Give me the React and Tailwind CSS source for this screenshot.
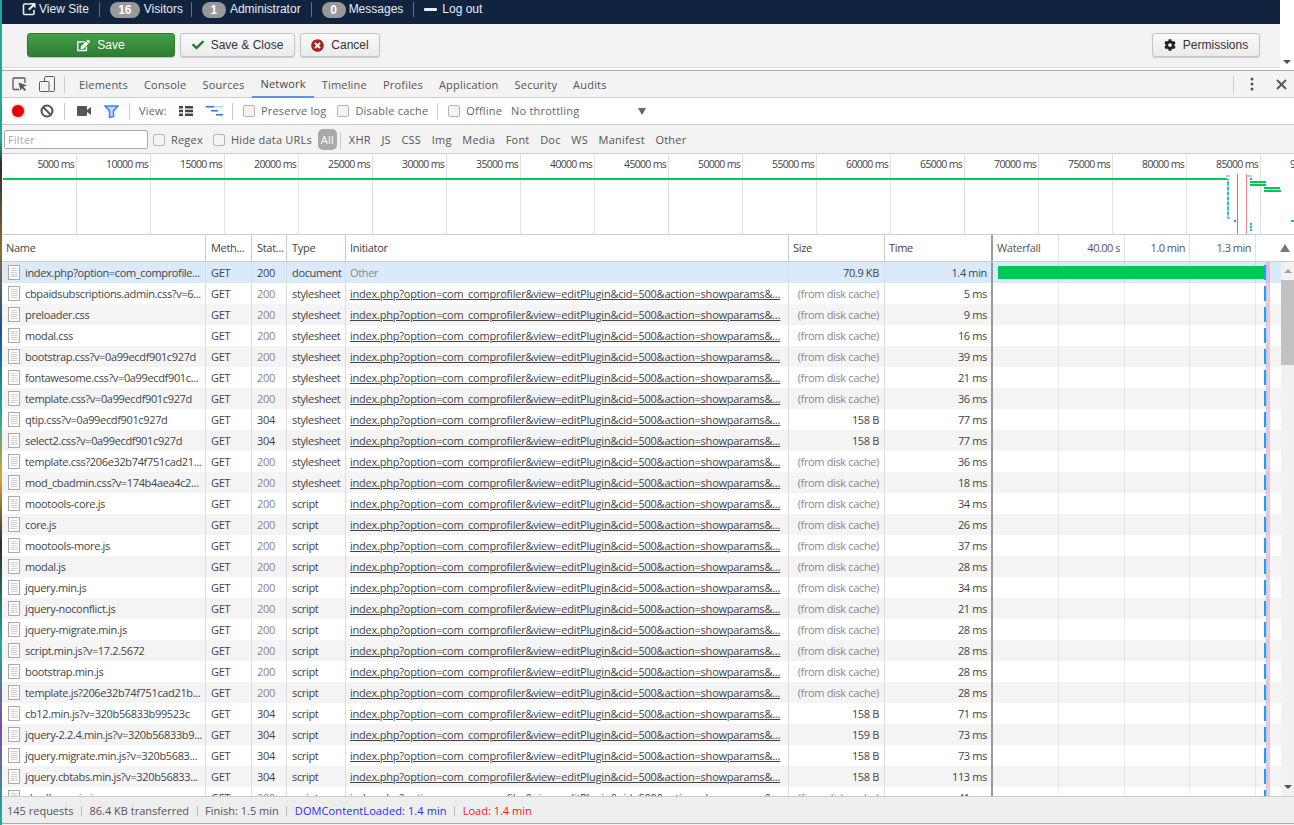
import React from "react";
import { FaCheck, FaTimesCircle, FaCog, FaEdit } from "react-icons/fa";

const INIT = "index.php?option=com_comprofiler&view=editPlugin&cid=500&action=showparams&...";
const rows = [
  ["index.php?option=com_comprofile...", "200", "document", "70.9 KB", "1.4 min"],
  ["cbpaidsubscriptions.admin.css?v=6...", "200", "stylesheet", "", "5 ms"],
  ["preloader.css", "200", "stylesheet", "", "9 ms"],
  ["modal.css", "200", "stylesheet", "", "16 ms"],
  ["bootstrap.css?v=0a99ecdf901c927d", "200", "stylesheet", "", "39 ms"],
  ["fontawesome.css?v=0a99ecdf901c...", "200", "stylesheet", "", "21 ms"],
  ["template.css?v=0a99ecdf901c927d", "200", "stylesheet", "", "36 ms"],
  ["qtip.css?v=0a99ecdf901c927d", "304", "stylesheet", "158 B", "77 ms"],
  ["select2.css?v=0a99ecdf901c927d", "304", "stylesheet", "158 B", "77 ms"],
  ["template.css?206e32b74f751cad21...", "200", "stylesheet", "", "36 ms"],
  ["mod_cbadmin.css?v=174b4aea4c2...", "200", "stylesheet", "", "18 ms"],
  ["mootools-core.js", "200", "script", "", "34 ms"],
  ["core.js", "200", "script", "", "26 ms"],
  ["mootools-more.js", "200", "script", "", "37 ms"],
  ["modal.js", "200", "script", "", "28 ms"],
  ["jquery.min.js", "200", "script", "", "34 ms"],
  ["jquery-noconflict.js", "200", "script", "", "21 ms"],
  ["jquery-migrate.min.js", "200", "script", "", "28 ms"],
  ["script.min.js?v=17.2.5672", "200", "script", "", "28 ms"],
  ["bootstrap.min.js", "200", "script", "", "28 ms"],
  ["template.js?206e32b74f751cad21b...", "200", "script", "", "28 ms"],
  ["cb12.min.js?v=320b56833b99523c", "304", "script", "158 B", "71 ms"],
  ["jquery-2.2.4.min.js?v=320b56833b9...", "304", "script", "159 B", "73 ms"],
  ["jquery.migrate.min.js?v=320b5683...", "304", "script", "158 B", "73 ms"],
  ["jquery.cbtabs.min.js?v=320b56833...", "304", "script", "158 B", "113 ms"],
  ["shadbox.min.js", "200", "script", "", "41 ms"],
];

const ticks = [5000,10000,15000,20000,25000,30000,35000,40000,45000,50000,55000,60000,65000,70000,75000,80000,85000,90000];

function DocIcon() {
  return (
    <svg width="12" height="15" viewBox="0 0 12 15" className="shrink-0">
      <rect x="0.5" y="0.5" width="11" height="14" fill="#fff" stroke="#a9a9a9" />
      <path d="M2.5 3.5h7M2.5 5.5h7M2.5 7.5h7M2.5 9.5h7M2.5 11.5h7" stroke="#d2d2d2" />
    </svg>
  );
}

function Check({ label, cls }) {
  return (
    <div className={`flex items-center ${cls}`}>
      <span className="w-[12px] h-[12px] rounded-[2px] border border-[#b4b4b4] bg-[#f4f4f4] mr-[6px] shrink-0" />
      <span>{label}</span>
    </div>
  );
}

function Sep() {
  return <span className="w-px h-[17px] bg-[#ccc] shrink-0" />;
}

function Badge({ n, cls }) {
  return (
    <span className={`h-[16px] rounded-[8px] bg-[#999] text-white font-bold text-[12px] leading-[16px] text-center ${cls}`}>{n}</span>
  );
}

function NavSep({ cls }) {
  return <span className={`w-px h-[15px] bg-[#5f6f85] ${cls}`} />;
}

function TopNav() {
  return (
    <div className="h-[24px] bg-[#10243f] text-[#e8edf2] text-[12px] flex items-start pl-[20px] pt-[2px] leading-[15px] [font-family:'Liberation_Sans',sans-serif]">
      <svg width="14" height="14" viewBox="0 0 14 14" className="mr-[3px]">
        <path d="M9 2H2.5A1 1 0 0 0 1.500 3v8.500a1 1 0 0 0 1 1H11a1 1 0 0 0 1-1V8" fill="none" stroke="#e8edf2" strokeWidth="1.6" />
        <path d="M8 1h5.500v5.500l-2-2-4 4-1.500-1.500 4-4z" fill="#e8edf2" />
      </svg>
      <span>View Site</span>
      <NavSep cls="mx-[10px]" />
      <Badge n="16" cls="w-[30px] mr-[4px]" />
      <span>Visitors</span>
      <NavSep cls="ml-[8px] mr-[10px]" />
      <Badge n="1" cls="w-[24px] mr-[4px]" />
      <span>Administrator</span>
      <NavSep cls="mx-[10px]" />
      <Badge n="0" cls="w-[24px] mr-[3px]" />
      <span>Messages</span>
      <NavSep cls="mx-[10px]" />
      <span className="w-[13px] h-[3px] bg-[#e8edf2] rounded-[1px] mt-[6px] mr-[5px]" />
      <span>Log out</span>
    </div>
  );
}

function ActionBar() {
  const btn = "h-[24px] rounded-[3px] border border-[#c4c4c4] bg-gradient-to-b from-[#fafafa] to-[#ebebeb] shadow-[0_1px_1px_rgba(0,0,0,0.15)] flex items-center justify-center text-[#333] text-[12px]";
  return (
    <div className="h-[44px] bg-[#f3f3f3] border-b border-[#ddd] flex items-start pt-[9px] pl-[25px] pr-[20px] [font-family:'Liberation_Sans',sans-serif]">
      <button className="w-[148px] h-[24px] rounded-[3px] border border-[#2c7a2e] bg-gradient-to-b from-[#43a047] to-[#2e7d32] text-white text-[12px] flex items-center justify-center gap-[7px] shadow-[0_1px_1px_rgba(0,0,0,0.2)]">
        <FaEdit size={13} color="#fff" />
        <span>Save</span>
      </button>
      <button className={`${btn} w-[115px] ml-[5px] gap-[7px]`}>
        <FaCheck size={12} color="#2e7d32" />
        <span>Save &amp; Close</span>
      </button>
      <button className={`${btn} w-[80px] ml-[5px] gap-[7px]`}>
        <FaTimesCircle size={13} color="#a5281f" />
        <span>Cancel</span>
      </button>
      <button className={`${btn} w-[108px] ml-auto gap-[7px]`}>
        <FaCog size={12} color="#222" />
        <span>Permissions</span>
      </button>
    </div>
  );
}

function TabsBar() {
  const tabs = ["Elements","Console","Sources","Network","Timeline","Profiles","Application","Security","Audits"];
  return (
    <div className="h-[27px] flex items-center border-b border-[#ccc] text-[#555] tracking-[0.2px]">
      <div className="w-[62px] flex items-center pl-[10px] gap-[11px] shrink-0">
        <svg width="16" height="15" viewBox="0 0 16 15">
          <path d="M7 12.500H2A1 1 0 0 1 1 11.500V2a1 1 0 0 1 1-1h10a1 1 0 0 1 1 1v4" fill="none" stroke="#5a5a5a" strokeWidth="1.300" />
          <path d="M6.500 5.500l8.500 3-3.500 1.200 2.500 3-1.500 1.200-2.500-3-1.500 3z" fill="#5a5a5a" />
        </svg>
        <svg width="16" height="16" viewBox="0 0 16 16">
          <path d="M5.500 5V1.500a1 1 0 0 1 1-1h8a1 1 0 0 1 1 1v13a1 1 0 0 1-1 1h-4" fill="none" stroke="#5a5a5a" />
          <rect x="0.500" y="5.500" width="9.500" height="10" rx="1" fill="#f3f3f3" stroke="#5a5a5a" />
        </svg>
      </div>
      <Sep />
      <div className="flex items-stretch h-full ml-[6px]">
        {tabs.map((t) => (
          <div key={t} className={t === "Network" ? "px-[8px] pt-[1px] flex items-center h-[27px] border-b-2 border-[#5b93ec] text-[#444]" : "px-[8px] pt-[2px] flex items-center h-[27px]"}>{t}</div>
        ))}
      </div>
      <div className="ml-auto flex items-center pr-[7px]">
        <Sep />
        <svg width="4" height="14" viewBox="0 0 4 14" className="ml-[16px]">
          <circle cx="2" cy="2" r="1.500" fill="#555" /><circle cx="2" cy="7" r="1.500" fill="#555" /><circle cx="2" cy="12" r="1.500" fill="#555" />
        </svg>
        <svg width="11" height="11" viewBox="0 0 11 11" className="ml-[22px]">
          <path d="M1 1l9 9M10 1l-9 9" stroke="#555" strokeWidth="1.800" />
        </svg>
      </div>
    </div>
  );
}

function NetToolbar() {
  return (
    <div className="h-[27px] bg-white flex items-center border-b border-[#ccc] text-[#666] tracking-[0.2px]">
      <span className="w-[12px] h-[12px] rounded-full bg-[#e60000] ml-[10px] shadow-[0_0_3px_#f06060] shrink-0" />
      <svg width="14" height="14" viewBox="0 0 14 14" className="ml-[16px] mr-[10px] shrink-0">
        <circle cx="7" cy="7" r="5.500" fill="none" stroke="#555" strokeWidth="2" />
        <path d="M3 3l8 8" stroke="#555" strokeWidth="2" />
      </svg>
      <Sep />
      <svg width="14" height="10" viewBox="0 0 14 10" className="ml-[12px] shrink-0">
        <rect x="0" y="0" width="10" height="10" rx="1" fill="#555" /><path d="M10 4l4-3v8l-4-3z" fill="#555" />
      </svg>
      <svg width="15" height="13" viewBox="0 0 15 13" className="ml-[13px] mr-[10px] shrink-0">
        <path d="M1 1h13L9.500 6v5.500l-4 1V6z" fill="#bcd6fa" stroke="#3b82e8" strokeWidth="1.500" />
      </svg>
      <Sep />
      <span className="ml-[9px]">View:</span>
      <svg width="14" height="10" viewBox="0 0 14 10" className="ml-[12px] shrink-0">
        <path d="M0 0h4v2.500H0zM6 0h8v2.500H6zM0 3.800h4v2.500H0zM6 3.800h8v2.500H6zM0 7.500h4V10H0zM6 7.500h8V10H6z" fill="#444" />
      </svg>
      <svg width="17" height="10" viewBox="0 0 17 10" className="ml-[13px] mr-[9px] shrink-0">
        <path d="M0 0h8v1.500H0zM5 4h7v1.500H5zM10 8h7v1.500h-7z" fill="#2f74d8" /><path d="M8 0h9v1.500H8z" fill="#bcd0ee" />
      </svg>
      <Sep />
      <Check label="Preserve log" cls="ml-[10px]" />
      <Check label="Disable cache" cls="ml-[11px] mr-[9px]" />
      <Sep />
      <Check label="Offline" cls="ml-[10px]" />
      <span className="ml-[9px] w-[127px]">No throttling</span>
      <span className="w-0 h-0 border-x-[4px] border-x-transparent border-t-[7px] border-t-[#666]" />
    </div>
  );
}

function FilterBar() {
  const types = ["XHR","JS","CSS","Img","Media","Font","Doc","WS","Manifest","Other"];
  return (
    <div className="h-[29px] flex items-center border-b border-[#ccc] text-[#555] pt-[2px] tracking-[0.2px]">
      <div className="w-[144px] h-[19px] ml-[2px] mb-[1px] bg-white border border-[#aaa] rounded-[2px] pl-[3px] leading-[18px] text-[#aaa] shrink-0">Filter</div>
      <Check label="Regex" cls="ml-[5px]" />
      <Check label="Hide data URLs" cls="ml-[10px]" />
      <span className="ml-[6px] mb-[2px] w-[19px] h-[21px] rounded-[5px] bg-[#a9a9a9] text-white text-center leading-[21px] shrink-0">All</span>
      <span className="w-px h-[17px] bg-[#ccc] mx-[3px]" />
      <div className="flex items-center gap-[10.7px] ml-[5px]">
        {types.map((t) => <span key={t}>{t}</span>)}
      </div>
    </div>
  );
}

function Overview() {
  return (
    <div className="relative h-[81px] bg-white border-b border-[#ccc] overflow-hidden shrink-0">
      <div className="flex h-full">
        {ticks.map((t, i) => (
          <div key={t} className={i === 0 ? "w-[75px] shrink-0 border-r border-[#e2e2e2] text-right pr-[2px] text-[10.5px] tracking-[-0.7px] leading-[20px] text-[#444]" : "w-[74px] shrink-0 border-r border-[#e2e2e2] text-right pr-[2px] text-[10.5px] tracking-[-0.7px] leading-[20px] text-[#444]"}>{t} ms</div>
        ))}
      </div>
      <svg className="absolute left-0 top-0" width="1292" height="80" viewBox="2 154 1292 80">
        <rect x="3" y="178" width="1224" height="2" fill="#00c853" />
        <rect x="1226" y="175" width="4" height="2" fill="#c8c8c8" />
        <path d="M1227 179h2v39h-2z" fill="#12b3a8" opacity="0.85" />
        <path d="M1226 181h4M1226 186h4M1226 191h4M1226 196h4M1226 201h4M1226 206h4M1226 211h4M1226 216h4" stroke="#fff" strokeWidth="1" />
        <rect x="1227" y="217" width="3" height="2" fill="#b0b0b0" />
        <rect x="1234" y="220" width="2" height="2" fill="#12b3a8" />
        <rect x="1237" y="174" width="1" height="60" fill="#7f7fe8" />
        <rect x="1246" y="174" width="1" height="60" fill="#f58a8a" />
        <rect x="1247" y="175" width="5" height="2" fill="#c8c8c8" />
        <rect x="1250" y="178" width="2" height="2" fill="#12b3a8" />
        <rect x="1250" y="181" width="16" height="2" fill="#00c853" />
        <rect x="1250" y="184" width="16" height="2" fill="#00c853" />
        <rect x="1264" y="187" width="16" height="2" fill="#00c853" />
        <rect x="1264" y="190" width="17" height="2" fill="#00c853" />
        <path d="M1250 223h2v2h-2zM1250 226h2v2h-2zM1250 229h2v2h-2z" fill="#12b3a8" />
        <rect x="1291" y="220" width="3" height="2" fill="#2aa5f0" />
      </svg>
    </div>
  );
}

function Header() {
  const c = "h-full flex items-center border-r border-[#ccc] shrink-0";
  return (
    <div className="h-[27px] flex items-stretch bg-white border-b border-[#ccc] text-[#444] shrink-0 tracking-[-0.3px]">
      <div className={`${c} w-[204px] pl-[4px]`}>Name</div>
      <div className={`${c} w-[46px] pl-[5px]`}>Meth...</div>
      <div className={`${c} w-[35px] pl-[5px]`}>Stat...</div>
      <div className={`${c} w-[59px] pl-[5px]`}>Type</div>
      <div className={`${c} w-[443px] pl-[4px]`}>Initiator</div>
      <div className={`${c} w-[96px] pl-[4px]`}>Size</div>
      <div className={`h-full flex items-center shrink-0 border-r-2 border-[#999] w-[108px] pl-[4px]`}>Time</div>
      <div className="flex-1 flex items-stretch text-[#555]">
        <div className="w-[66px] border-r border-[#e2e2e2] pl-[4px] flex items-center">Waterfall</div>
        <div className="w-[66px] border-r border-[#e2e2e2] pr-[4px] flex items-center justify-end tracking-[-0.5px]">40.00 s</div>
        <div className="w-[65px] border-r border-[#e2e2e2] pr-[4px] flex items-center justify-end tracking-[-0.5px]">1.0 min</div>
        <div className="w-[66px] border-r border-[#e2e2e2] pr-[4px] flex items-center justify-end tracking-[-0.5px]">1.3 min</div>
        <div className="flex-1 flex items-center justify-end pr-[4px]">
          <span className="w-0 h-0 border-x-[5px] border-x-transparent border-b-[8px] border-b-[#777]" />
        </div>
      </div>
    </div>
  );
}

function Row({ r, i }) {
  const [name, status, type, size, time] = r;
  const selected = i === 0;
  const bg = selected ? "bg-[#d9eafb]" : i % 2 === 1 ? "bg-white" : "bg-[#f4f4f4]";
  const cached = size === "";
  const c = "h-full border-r border-[#dedede] shrink-0 overflow-hidden whitespace-nowrap";
  return (
    <div className={`h-[21px] flex items-stretch leading-[21px] text-[#444] shrink-0 tracking-[-0.35px] ${bg}`}>
      <div className={`${c} w-[204px] flex items-center pl-[6px] gap-[5px]`}>
        <DocIcon />
        <span>{name}</span>
      </div>
      <div className={`${c} w-[46px] pl-[5px]`}>GET</div>
      <div className={cached ? `${c} w-[35px] pl-[5px] text-[#888]` : `${c} w-[35px] pl-[5px]`}>{status}</div>
      <div className={`${c} w-[59px] pl-[5px]`}>{type}</div>
      {selected ? (
        <div className={`${c} w-[443px] pl-[4px] text-[#888]`}>Other</div>
      ) : (
        <div className={`${c} w-[443px] pl-[4px] tracking-[-0.22px]`}><span className="underline">{INIT}</span></div>
      )}
      {cached ? (
        <div className={`${c} w-[96px] pr-[5px] text-right text-[#888]`}>(from disk cache)</div>
      ) : (
        <div className={`${c} w-[96px] pr-[5px] text-right`}>{size}</div>
      )}
      <div className="h-full shrink-0 overflow-hidden whitespace-nowrap border-r-2 border-[#999] w-[108px] pr-[4px] text-right">{time}</div>
      <div className="flex-1 flex items-stretch">
        <div className="w-[66px] border-r border-[#00000012]" />
        <div className="w-[66px] border-r border-[#00000012]" />
        <div className="w-[65px] border-r border-[#00000012]" />
        <div className="w-[66px] border-r border-[#00000012]" />
        <div className="pl-[8px] py-[3px]"><div className="w-[2px] h-full bg-[#1aa3f2]" /></div>
      </div>
    </div>
  );
}

function Scrollbar() {
  return (
    <div className="w-[13px] bg-[#f1f1f1] flex flex-col items-center shrink-0">
      <div className="h-[18px] flex items-center justify-center shrink-0">
        <span className="w-0 h-0 border-x-[4px] border-x-transparent border-b-[4px] border-b-[#a0a0a0]" />
      </div>
      <div className="w-full h-[85px] bg-[#c1c1c1] shrink-0" />
      <div className="flex-1" />
      <div className="h-[18px] flex items-center justify-center shrink-0">
        <span className="w-0 h-0 border-x-[4px] border-x-transparent border-t-[4px] border-t-[#505050]" />
      </div>
    </div>
  );
}

export default function App() {
  return (
    <div className="w-[1294px] h-[825px] overflow-hidden flex bg-white">
      <div className="w-[2px] shrink-0 bg-[linear-gradient(180deg,#26a69a_0%,#26a69a_17%,#2b2b2b_20%,#8a6d3b_30%,#1e4f8f_40%,#26a69a_50%,#d9a441_58%,#2b2b2b_66%,#26a69a_78%,#7d4e9c_88%,#26a69a_100%)]" />
      <div className="flex-1 min-w-0 flex flex-col">
        <div className="flex h-[70px] shrink-0">
          <div className="w-[1278px] shrink-0">
            <TopNav />
            <ActionBar />
          </div>
          <div className="flex-1 bg-white flex items-end justify-center pb-[6px]">
            <span className="w-0 h-0 border-x-[4px] border-x-transparent border-t-[4px] border-t-[#505050]" />
          </div>
        </div>
        <div className="flex-1 min-h-0 flex flex-col border-t border-[#aaa] bg-[#f3f3f3] text-[11px] [font-family:'Open_Sans',sans-serif]">
          <TabsBar />
          <NetToolbar />
          <FilterBar />
          <Overview />
          <Header />
          <div className="h-[534px] flex shrink-0 overflow-hidden">
            <div className="relative w-[1279px] shrink-0 flex flex-col overflow-hidden">
              {rows.map((r, i) => <Row key={i} r={r} i={i} />)}
              <div className="absolute left-[996px] top-[4px] w-[266px] h-[13px] bg-[#00c853]" />
              <div className="absolute left-[1262px] top-[3px] w-[2px] h-[15px] bg-[#1aa3f2]" />
              <div className="absolute left-[1264px] top-0 bottom-0 w-px bg-[#a9a9ef]/60" />
              <div className="absolute left-[1265px] top-0 bottom-0 w-[3px] bg-[#f5a0a8]/60" />
            </div>
            <Scrollbar />
          </div>
          <div className="h-[28px] bg-[#eee] border-t border-[#ccc] border-b border-b-[#aaa] flex items-center pl-[5px] pt-[2px] text-[#555] shrink-0">
            <span>145 requests</span>
            <span className="w-px h-[10px] bg-[#bbb] mx-[7.5px]" />
            <span>86.4 KB transferred</span>
            <span className="w-px h-[10px] bg-[#bbb] mx-[7.5px]" />
            <span>Finish: 1.5 min</span>
            <span className="w-px h-[10px] bg-[#bbb] mx-[7.5px]" />
            <span className="text-[#2a2aff] tracking-[0.1px]">DOMContentLoaded: 1.4 min</span>
            <span className="w-px h-[10px] bg-[#bbb] mx-[7.5px]" />
            <span className="text-[#f02020]">Load: 1.4 min</span>
          </div>
        </div>
      </div>
    </div>
  );
}
